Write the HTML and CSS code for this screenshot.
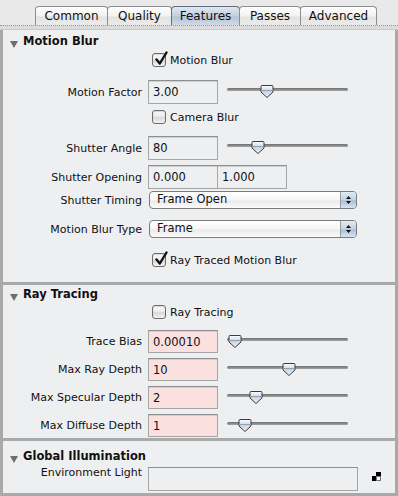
FILE: index.html
```html
<!DOCTYPE html>
<html>
<head>
<meta charset="utf-8">
<link rel="stylesheet" href="styles.css">
</head>
<body>
<div class="tabbar">
  <div class="tabs">
    <div class="tab t-common">Common</div>
    <div class="tab t-quality">Quality</div>
    <div class="tab t-features active">Features</div>
    <div class="tab t-passes">Passes</div>
    <div class="tab t-advanced">Advanced</div>
  </div>
</div>
<div class="panel">
  <section class="sec sec-mb">
    <div class="head"><span class="tri"></span><span class="head-text">Motion Blur</span></div>

    <div class="row cbrow r-mb">
      <span class="lbl"></span>
      <label class="cb"><span class="box"><svg viewBox="0 0 16 16" width="16" height="16"><path d="M3.5 8.5 L6.8 12.5 L13.5 1.5" fill="none" stroke="#111" stroke-width="2.4" stroke-linejoin="round" stroke-linecap="round"/></svg></span>Motion Blur</label>
    </div>

    <div class="row fieldrow r-mf">
      <span class="lbl">Motion Factor</span>
      <span class="field">3.00</span>
      <span class="slider"><span class="track"></span><span class="thumb" style="left:33px"><svg viewBox="0 0 14 13" width="14" height="13"><defs><linearGradient id="tg1" x1="0" y1="0" x2="0" y2="1"><stop offset="0" stop-color="#fdfdfd"/><stop offset="0.5" stop-color="#c9d3de"/><stop offset="1" stop-color="#f4f4f4"/></linearGradient></defs><path d="M1 1.5 Q1 0.5 2 0.5 H12 Q13 0.5 13 1.5 V7 L7 12.5 L1 7 Z" fill="url(#tg1)" stroke="#3c3c3c" stroke-width="1"/><path d="M1.5 5.5 H12.5" stroke="#8ea2b8" stroke-width="1"/></svg></span></span>
    </div>

    <div class="row cbrow r-cam">
      <span class="lbl"></span>
      <label class="cb"><span class="box"></span>Camera Blur</label>
    </div>

    <div class="row fieldrow r-sa">
      <span class="lbl">Shutter Angle</span>
      <span class="field">80</span>
      <span class="slider"><span class="track"></span><span class="thumb" style="left:24px"><svg viewBox="0 0 14 13" width="14" height="13"><path d="M1 1.5 Q1 0.5 2 0.5 H12 Q13 0.5 13 1.5 V7 L7 12.5 L1 7 Z" fill="url(#tg1)" stroke="#3c3c3c" stroke-width="1"/><path d="M1.5 5.5 H12.5" stroke="#8ea2b8" stroke-width="1"/></svg></span></span>
    </div>

    <div class="row fieldrow r-so">
      <span class="lbl">Shutter Opening</span>
      <span class="field">0.000</span>
      <span class="field field2">1.000</span>
    </div>

    <div class="row selrow r-st">
      <span class="lbl">Shutter Timing</span>
      <span class="select"><span class="sel-text">Frame Open</span><span class="sel-btn"><svg viewBox="0 0 7 10" width="7" height="10"><path d="M3.5 1 L6 4 H1 Z M3.5 9 L6 6 H1 Z" fill="#111"/></svg></span></span>
    </div>

    <div class="row selrow r-mbt">
      <span class="lbl">Motion Blur Type</span>
      <span class="select"><span class="sel-text">Frame</span><span class="sel-btn"><svg viewBox="0 0 7 10" width="7" height="10"><path d="M3.5 1 L6 4 H1 Z M3.5 9 L6 6 H1 Z" fill="#111"/></svg></span></span>
    </div>

    <div class="row cbrow r-rtmb">
      <span class="lbl"></span>
      <label class="cb"><span class="box"><svg viewBox="0 0 16 16" width="16" height="16"><path d="M3.5 8.5 L6.8 12.5 L13.5 1.5" fill="none" stroke="#111" stroke-width="2.4" stroke-linejoin="round" stroke-linecap="round"/></svg></span>Ray Traced Motion Blur</label>
    </div>
  </section>

  <section class="sec sec-rt">
    <div class="head"><span class="tri"></span><span class="head-text">Ray Tracing</span></div>

    <div class="row cbrow r-rt">
      <span class="lbl"></span>
      <label class="cb"><span class="box"></span>Ray Tracing</label>
    </div>

    <div class="row fieldrow pinkrow r-tb">
      <span class="lbl">Trace Bias</span>
      <span class="field pink">0.00010</span>
      <span class="slider"><span class="track"></span><span class="thumb" style="left:1px"><svg viewBox="0 0 14 13" width="14" height="13"><path d="M1 1.5 Q1 0.5 2 0.5 H12 Q13 0.5 13 1.5 V7 L7 12.5 L1 7 Z" fill="url(#tg1)" stroke="#3c3c3c" stroke-width="1"/><path d="M1.5 5.5 H12.5" stroke="#8ea2b8" stroke-width="1"/></svg></span></span>
    </div>

    <div class="row fieldrow pinkrow">
      <span class="lbl">Max Ray Depth</span>
      <span class="field pink">10</span>
      <span class="slider"><span class="track"></span><span class="thumb" style="left:55px"><svg viewBox="0 0 14 13" width="14" height="13"><path d="M1 1.5 Q1 0.5 2 0.5 H12 Q13 0.5 13 1.5 V7 L7 12.5 L1 7 Z" fill="url(#tg1)" stroke="#3c3c3c" stroke-width="1"/><path d="M1.5 5.5 H12.5" stroke="#8ea2b8" stroke-width="1"/></svg></span></span>
    </div>

    <div class="row fieldrow pinkrow">
      <span class="lbl">Max Specular Depth</span>
      <span class="field pink">2</span>
      <span class="slider"><span class="track"></span><span class="thumb" style="left:22px"><svg viewBox="0 0 14 13" width="14" height="13"><path d="M1 1.5 Q1 0.5 2 0.5 H12 Q13 0.5 13 1.5 V7 L7 12.5 L1 7 Z" fill="url(#tg1)" stroke="#3c3c3c" stroke-width="1"/><path d="M1.5 5.5 H12.5" stroke="#8ea2b8" stroke-width="1"/></svg></span></span>
    </div>

    <div class="row fieldrow pinkrow">
      <span class="lbl">Max Diffuse Depth</span>
      <span class="field pink">1</span>
      <span class="slider"><span class="track"></span><span class="thumb" style="left:11px"><svg viewBox="0 0 14 13" width="14" height="13"><path d="M1 1.5 Q1 0.5 2 0.5 H12 Q13 0.5 13 1.5 V7 L7 12.5 L1 7 Z" fill="url(#tg1)" stroke="#3c3c3c" stroke-width="1"/><path d="M1.5 5.5 H12.5" stroke="#8ea2b8" stroke-width="1"/></svg></span></span>
    </div>
  </section>

  <section class="sec sec-gi">
    <div class="head"><span class="tri"></span><span class="head-text">Global Illumination</span></div>
    <div class="row envrow">
      <span class="lbl">Environment Light</span>
      <span class="envfield"></span>
      <span class="envicon"><svg viewBox="0 0 9 9" width="9" height="9"><rect x="4" y="0" width="5" height="5" fill="#000"/><rect x="0" y="4" width="5" height="5" fill="#000"/><rect x="4.5" y="4.5" width="4" height="4" fill="#fff" stroke="#777" stroke-width="1"/></svg></span>
    </div>
  </section>
</div>
</body>
</html>
```

FILE: styles.css
```css
* { box-sizing: border-box; }

html, body {
  margin: 0;
  padding: 0;
}

body {
  width: 398px;
  height: 496px;
  overflow: hidden;
  background: #e8e8e8;
  font-family: "DejaVu Sans", "Liberation Sans", sans-serif;
  font-size: 11px;
  color: #111;
}

/* ---------- tabs ---------- */
.tabbar {
  height: 30px;
  padding-top: 6px;
  background: #e9e9e9;
  border-bottom: 1px solid #c9c9c9;
}

.tabbar::after {
  content: "";
  display: block;
  height: 3px;
  border-top: 1px dotted #9a9a9a;
  background: #dcdcdc;
}

.tabs {
  display: flex;
  padding-left: 35px;
  height: 19px;
}

.tab {
  height: 19px;
  border: 1px solid #8e8e8e;
  border-bottom: none;
  border-radius: 4px 4px 0 0;
  background: linear-gradient(#fefefe, #f1f1f1 50%, #e2e2e2 55%, #ececec);
  font-size: 12px;
  line-height: 18px;
  text-align: center;
  color: #111;
  margin-right: -1px;
}

.t-common { width: 73px; }
.t-quality { width: 65px; }
.t-features { width: 69px; }
.t-passes { width: 62px; }
.t-advanced { width: 77px; }

.tab.active {
  background: linear-gradient(#dfe7ef, #c3d0dd 50%, #b3c3d4 55%, #cfdbe7);
  border-color: #5f6f80;
}

/* ---------- panel ---------- */
.panel {
  border-left: 3px solid #a9a9a9;
  border-right: 3px solid #a9a9a9;
  border-bottom: 3px solid #a9a9a9;
  background: #eeeff1;
  height: 466px;
}

.sec + .sec {
  border-top: 3px solid #a9a9a9;
}

.sec-mb { padding-bottom: 15px; }
.sec-rt { padding-bottom: 1px; }

.head {
  display: flex;
  align-items: center;
  height: 22px;
  padding-left: 7px;
  font-weight: bold;
  font-size: 11.5px;
}

.sec-rt .head {
  height: 18px;
}

.sec-gi .head {
  height: 26px;
  padding-top: 3px;
}

.tri {
  width: 0;
  height: 0;
  border-left: 4px solid transparent;
  border-right: 4px solid transparent;
  border-top: 7px solid #6e6e6e;
  margin-top: 7px;
  margin-right: 5px;
}

/* ---------- rows ---------- */
.row {
  display: flex;
  align-items: center;
}

.lbl {
  width: 139px;
  flex: none;
  text-align: right;
  margin-right: 6px;
  white-space: nowrap;
}

.cbrow { height: 14px; }
.fieldrow { height: 24px; }
.selrow { height: 18px; }

.r-mb { margin-top: 1px; }
.r-mf { margin-top: 13px; }
.r-cam { margin-top: 6px; }
.r-sa { margin-top: 12px; }
.r-so { margin-top: 5px; }
.r-st { margin-top: 2px; }
.r-mbt { margin-top: 11px; }
.r-rtmb { margin-top: 15px; }

.r-rt { margin-top: 2px; }
.pinkrow { margin-top: 5px; height: 23px; }
.pinkrow.r-tb { margin-top: 11px; }

/* checkbox */
.cb {
  display: flex;
  align-items: center;
  margin-left: 4px;
}

.box {
  position: relative;
  width: 14px;
  height: 14px;
  border: 1px solid #6d6d6d;
  border-radius: 3px;
  background: linear-gradient(#fdfdfd, #e8e8e8 50%, #d9d9d9 55%, #f3f3f3);
  box-shadow: inset 0 1px 1px rgba(0,0,0,0.15);
  margin-right: 4px;
}

.box svg {
  position: absolute;
  left: 0;
  top: -3px;
}

/* text field */
.field {
  width: 70px;
  height: 24px;
  border: 1px solid #a6a6a6;
  border-top-color: #8f8f8f;
  box-shadow: inset 0 1px 0 #d0d0d0;
  background: #eeeff1;
  padding: 3px 0 0 4px;
  line-height: 16px;
  font-size: 11.5px;
  flex: none;
}

.field2 {
  width: 70px;
  margin-left: -1px;
}

.field.pink {
  background: #fbe0e0;
  height: 23px;
}

/* slider */
.slider {
  position: relative;
  width: 121px;
  height: 14px;
  margin-left: 9px;
  flex: none;
}

.track {
  position: absolute;
  left: 0;
  right: 0;
  top: 3px;
  height: 3px;
  border-radius: 2px;
  background: linear-gradient(#6f6f6f, #a4a4a4);
}

.thumb {
  position: absolute;
  top: 0;
  width: 14px;
  height: 13px;
}

.thumb svg { display: block; }

/* select */
.select {
  display: flex;
  width: 208px;
  height: 18px;
  margin-left: 1px;
  border: 1px solid #7c7c7c;
  border-radius: 4px;
  background: linear-gradient(#ffffff, #f6f6f6 50%, #e9e9e9 55%, #fbfbfb);
  overflow: hidden;
}

.sel-text {
  flex: 1;
  padding-left: 7px;
  line-height: 15px;
  font-size: 11.5px;
}

.sel-btn {
  width: 16px;
  display: flex;
  align-items: center;
  justify-content: center;
  border-left: 1px solid #9a9a9a;
  background: linear-gradient(#e3ebf3, #c2d2e3 50%, #a8bfd8 55%, #d8e5f2);
}

/* env */
.envrow {
  align-items: flex-start;
  height: 24px;
}

.envrow .lbl { line-height: 14px; margin-top: -1px; }

.envfield {
  width: 210px;
  height: 24px;
  border: 1px solid #a6a6a6;
  border-top-color: #8f8f8f;
  background: #eeeff1;
  flex: none;
}

.envicon {
  margin-left: 14px;
  margin-top: 5px;
  display: flex;
}
```
